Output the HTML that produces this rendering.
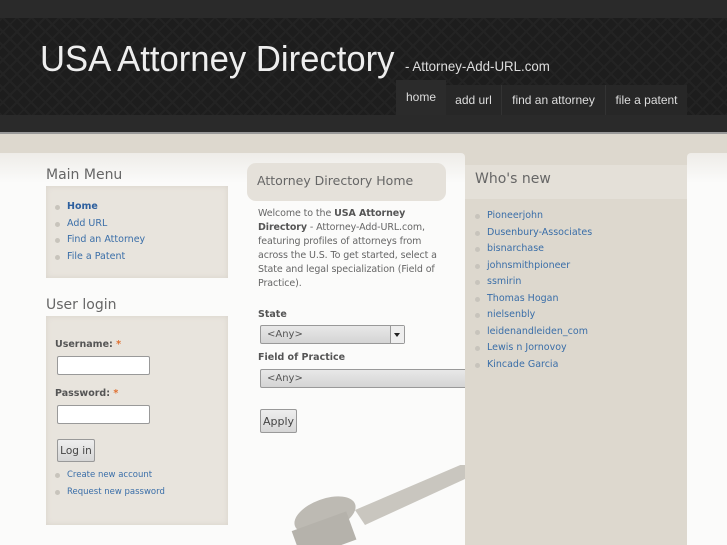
<!DOCTYPE html>
<html><head><style>
*{margin:0;padding:0;box-sizing:border-box}
body{width:727px;height:545px;overflow:hidden;background:#ddd8ce;font-family:"DejaVu Sans","Liberation Sans",sans-serif;position:relative}
.abs{position:absolute}
a{color:#3a6ea8;text-decoration:none}
.bul{position:absolute;width:5px;height:5px;border-radius:50%;background:#c8c4bc}
</style></head><body>
<div class="abs" style="left:0;top:0;width:727px;height:18px;background:#2a2a2a"></div>
<div class="abs" style="left:0;top:18px;width:727px;height:97px;background:#1d1d1d;background-image:repeating-linear-gradient(45deg,#232323 0 2px,transparent 2px 10px),repeating-linear-gradient(-45deg,#232323 0 2px,transparent 2px 10px)"></div>
<div class="abs" style="left:0;top:115px;width:727px;height:17px;background:#2a2a2a"></div>
<div class="abs" style="left:0;top:132px;width:727px;height:2px;background:#999"></div>
<div class="abs" style="left:40px;top:38px;font-family:'Liberation Sans',sans-serif;font-size:36px;color:#eee;white-space:nowrap;transform:scaleX(0.963);transform-origin:left">USA Attorney Directory</div>
<div class="abs" style="left:405px;top:58px;font-family:'Liberation Sans',sans-serif;font-size:14px;color:#ddd;transform:scaleX(0.95);transform-origin:left">- Attorney-Add-URL.com</div>
<div class="abs" style="left:396px;top:80px;width:50px;height:35px;background:#2b2b2b;color:#ddd;font-family:'Liberation Sans',sans-serif;font-size:12px;text-align:center;padding-top:10px">home</div>
<div class="abs" style="left:446px;top:85px;width:241px;height:30px;background:#272727;font-family:'Liberation Sans',sans-serif;font-size:12px;color:#ddd">
<span class="abs" style="left:0;top:0;width:56px;height:30px;border-right:1px solid #333;text-align:center;padding-top:8px">add url</span>
<span class="abs" style="left:56px;top:0;width:104px;height:30px;border-right:1px solid #333;text-align:center;padding-top:8px">find an attorney</span>
<span class="abs" style="left:160px;top:0;width:81px;height:30px;text-align:center;padding-top:8px">file a patent</span>
</div>
<div class="abs" style="left:0;top:153px;width:465px;height:392px;background:linear-gradient(#eeece8,#fbfbfa 30px);border-radius:0 4px 0 0"></div>
<div class="abs" style="left:687px;top:153px;width:40px;height:392px;background:linear-gradient(#eeece8,#fbfbfa 30px);border-radius:4px 0 0 0"></div>

<div class="abs" style="left:46px;top:167px;font-size:14px;color:#666">Main Menu</div>
<div class="abs" style="left:46px;top:186px;width:182px;height:92px;background:#e8e4dd;box-shadow:inset 0 0 6px #d8d3ca"></div>
<div class="abs" style="left:55px;top:199px;font-size:9.5px;line-height:16.5px">
<div style="position:relative"><span class="bul" style="left:0;top:6px"></span><a style="margin-left:12px;font-weight:bold;color:#2d5f9e">Home</a></div>
<div style="position:relative"><span class="bul" style="left:0;top:6px"></span><a style="margin-left:12px">Add URL</a></div>
<div style="position:relative"><span class="bul" style="left:0;top:6px"></span><a style="margin-left:12px">Find an Attorney</a></div>
<div style="position:relative"><span class="bul" style="left:0;top:6px"></span><a style="margin-left:12px">File a Patent</a></div>
</div>
<div class="abs" style="left:46px;top:297px;font-size:14px;color:#666">User login</div>
<div class="abs" style="left:46px;top:316px;width:182px;height:209px;background:#e8e4dd;box-shadow:inset 0 0 6px #d8d3ca"></div>
<div class="abs" style="left:55px;top:339px;font-size:9.5px;font-weight:bold;color:#555">Username: <span style="color:#e07030">*</span></div>
<div class="abs" style="left:57px;top:356px;width:93px;height:19px;background:#fff;border:1px solid #999;border-radius:2px"></div>
<div class="abs" style="left:55px;top:388px;font-size:9.5px;font-weight:bold;color:#555">Password: <span style="color:#e07030">*</span></div>
<div class="abs" style="left:57px;top:405px;width:93px;height:19px;background:#fff;border:1px solid #999;border-radius:2px"></div>
<div class="abs" style="left:57px;top:439px;width:38px;height:23px;background:linear-gradient(#eee,#d6d6d6);border:1px solid #999;border-radius:2px;font-size:10.5px;color:#444;text-align:center;padding-top:5px">Log in</div>
<div class="abs" style="left:55px;top:467px;font-size:8.5px;line-height:17px">
<div style="position:relative"><span class="bul" style="left:0;top:6px"></span><a style="margin-left:12px">Create new account</a></div>
<div style="position:relative"><span class="bul" style="left:0;top:6px"></span><a style="margin-left:12px">Request new password</a></div>
</div>

<div class="abs" style="left:247px;top:163px;width:199px;height:38px;background:#e5e1da;border-radius:9px"></div>
<div class="abs" style="left:257px;top:173px;font-size:12.5px;color:#666">Attorney Directory Home</div>
<div class="abs" style="left:258px;top:207px;width:192px;font-size:9.5px;line-height:14px;color:#666;letter-spacing:-0.1px">Welcome to the <b style="color:#555">USA Attorney Directory</b> - Attorney-Add-URL.com, featuring profiles of attorneys from across the U.S. To get started, select a State and legal specialization (Field of Practice).</div>
<div class="abs" style="left:258px;top:309px;font-size:9.5px;font-weight:bold;color:#555">State</div>
<div class="abs" style="left:260px;top:325px;width:145px;height:19px;background:linear-gradient(#e8e8e8,#d4d4d4);border:1px solid #999;border-radius:2px;font-size:10px;color:#555;padding:3px 0 0 6px">&lt;Any&gt;<span class="abs" style="right:0;top:0;width:14px;height:17px;border-left:1px solid #999;background:#eee"></span><span class="abs" style="right:4px;top:7px;border:3px solid transparent;border-top:4px solid #222"></span></div>
<div class="abs" style="left:258px;top:352px;font-size:9.5px;font-weight:bold;color:#555">Field of Practice</div>
<div class="abs" style="left:260px;top:369px;width:210px;height:19px;background:linear-gradient(#e8e8e8,#d4d4d4);border:1px solid #999;border-radius:2px;font-size:10px;color:#555;padding:3px 0 0 6px">&lt;Any&gt;</div>
<div class="abs" style="left:260px;top:409px;width:37px;height:24px;background:linear-gradient(#eee,#d6d6d6);border:1px solid #999;border-radius:2px;font-size:11px;color:#444;text-align:center;padding-top:5px">Apply</div>
<svg class="abs" style="left:285px;top:465px" width="180" height="80"><path d="M70 45 L180 -2 L180 14 L80 60Z" fill="#c9c6bf"/><ellipse cx="40" cy="50" rx="32" ry="16" fill="#bdbab3" transform="rotate(-20 40 50)"/><rect x="10" y="55" width="58" height="30" fill="#b5b2ab" transform="rotate(-20 40 70)"/></svg>

<div class="abs" style="left:465px;top:153px;width:222px;height:392px;background:#ddd8ce"></div>
<div class="abs" style="left:465px;top:165px;width:222px;height:34px;background:#e4e0d8"></div>
<div class="abs" style="left:475px;top:171px;font-size:14px;color:#666">Who's new</div>
<div class="abs" style="left:475px;top:208px;font-size:9.5px;line-height:16.5px">
<div style="position:relative"><span class="bul" style="left:0;top:6px"></span><a style="margin-left:12px">Pioneerjohn</a></div>
<div style="position:relative"><span class="bul" style="left:0;top:6px"></span><a style="margin-left:12px">Dusenbury-Associates</a></div>
<div style="position:relative"><span class="bul" style="left:0;top:6px"></span><a style="margin-left:12px">bisnarchase</a></div>
<div style="position:relative"><span class="bul" style="left:0;top:6px"></span><a style="margin-left:12px">johnsmithpioneer</a></div>
<div style="position:relative"><span class="bul" style="left:0;top:6px"></span><a style="margin-left:12px">ssmirin</a></div>
<div style="position:relative"><span class="bul" style="left:0;top:6px"></span><a style="margin-left:12px">Thomas Hogan</a></div>
<div style="position:relative"><span class="bul" style="left:0;top:6px"></span><a style="margin-left:12px">nielsenbly</a></div>
<div style="position:relative"><span class="bul" style="left:0;top:6px"></span><a style="margin-left:12px">leidenandleiden_com</a></div>
<div style="position:relative"><span class="bul" style="left:0;top:6px"></span><a style="margin-left:12px">Lewis n Jornovoy</a></div>
<div style="position:relative"><span class="bul" style="left:0;top:6px"></span><a style="margin-left:12px">Kincade Garcia</a></div>
</div>
</body></html>
